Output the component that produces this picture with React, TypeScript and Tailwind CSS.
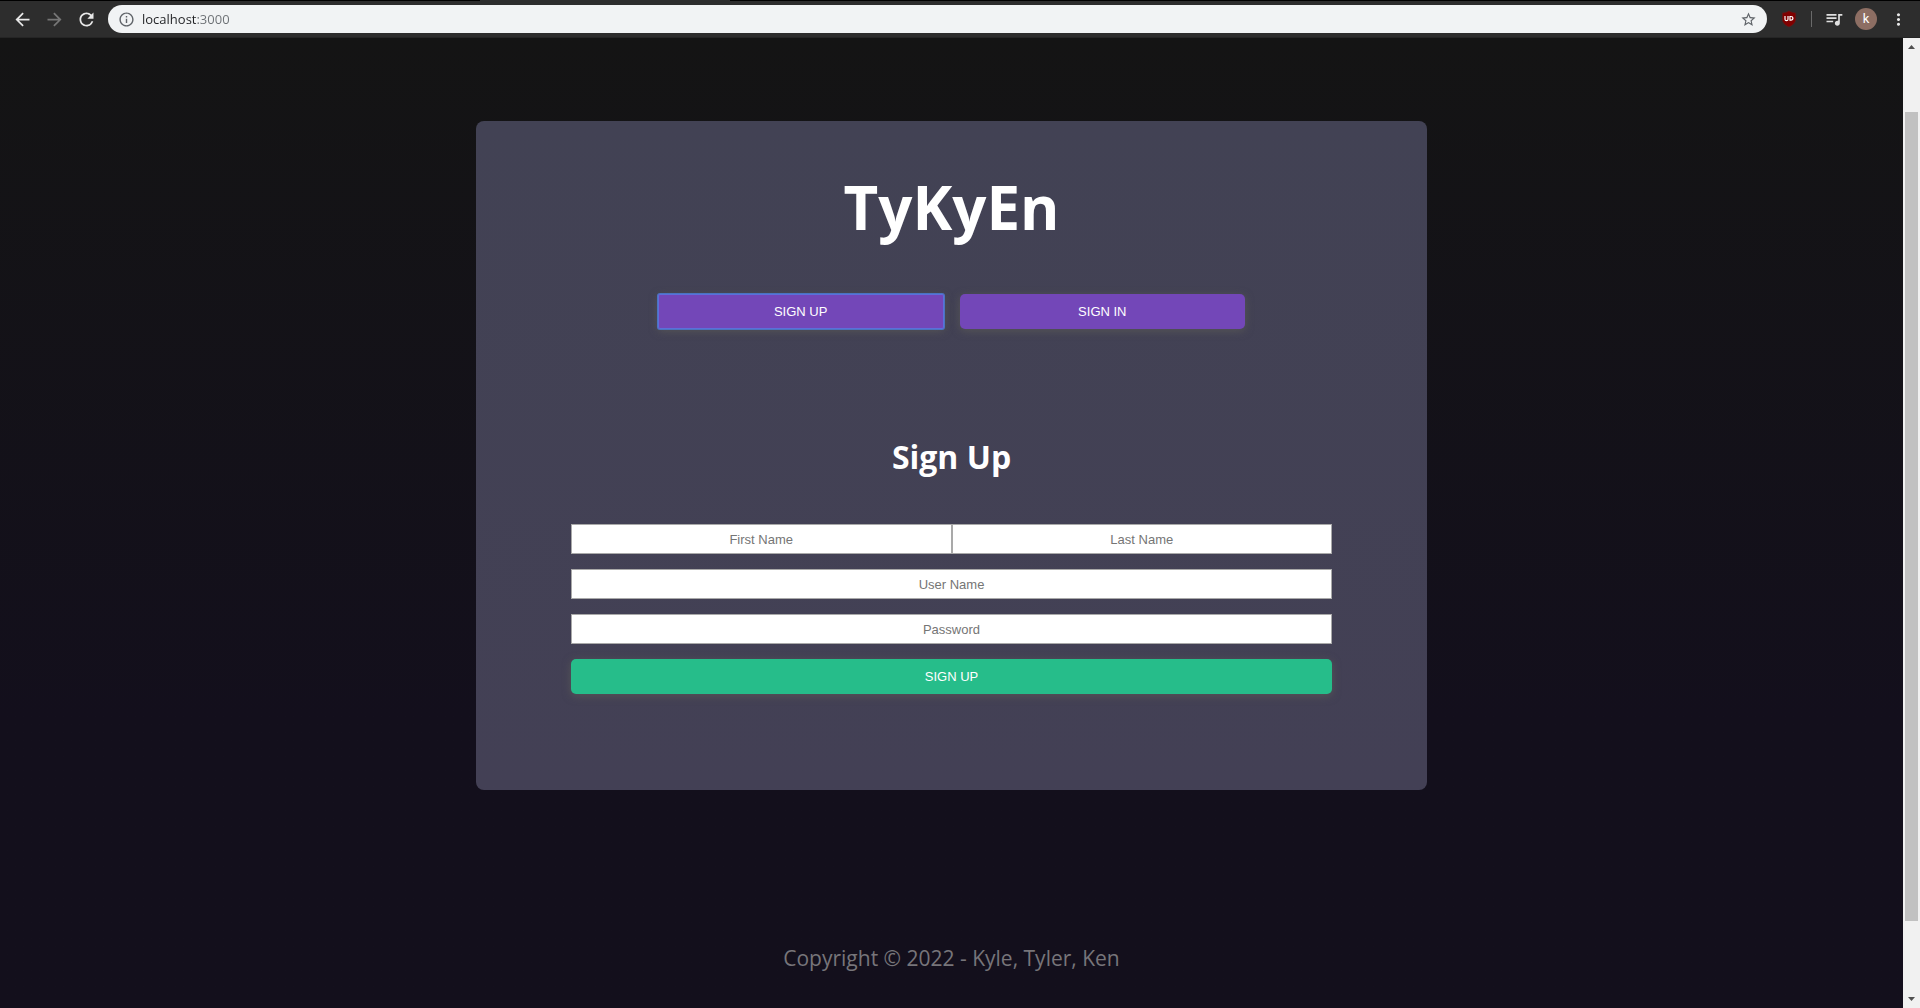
import type { ReactNode } from "react";
import {
  MdArrowBack,
  MdArrowForward,
  MdInfoOutline,
  MdMoreVert,
  MdQueueMusic,
  MdRefresh,
  MdStarBorder,
} from "react-icons/md";

function IconButton({ label, className, children }: { label: string; className: string; children: ReactNode }) {
  return (
    <button type="button" aria-label={label} className={`flex h-7 w-8 shrink-0 items-center justify-center ${className}`}>
      {children}
    </button>
  );
}

function ShieldIcon() {
  return (
    <svg width="16" height="18" viewBox="0 0 16 18" aria-hidden="true">
      <path d="M8 .8C6 2.300 3.600 2.800 1.300 2.900V9c0 4 3.200 6.400 6.700 8C11.500 15.400 14.700 13 14.700 9V2.900C12.400 2.800 10 2.300 8 .8z" fill="#800000" stroke="#5a2020" strokeWidth=".6" />
      <path d="M4 6v3.200c0 1 .6 1.500 1.500 1.500s1.500-.5 1.500-1.500V6M9 6.500v3.700h.9c1.300 0 2-.7 2-1.850s-.7-1.850-2-1.850z" fill="none" stroke="#fff" strokeWidth="1.200" />
    </svg>
  );
}

function Toolbar() {
  return (
    <header className="flex h-[38px] shrink-0 flex-col border-b border-[#252525] bg-[#2d2d2d]">
      <div className="flex h-px bg-black">
        <div className="w-1/4" />
        <div className="w-[13%] bg-[#2d2d2d]" />
      </div>
      <div className="flex flex-1 items-center px-1.5">
        <IconButton label="Back" className="text-[#e8e8e8]">
          <MdArrowBack size={21} />
        </IconButton>
        <IconButton label="Forward" className="text-[#767676]">
          <MdArrowForward size={21} />
        </IconButton>
        <IconButton label="Reload" className="text-[#e8e8e8]">
          <MdRefresh size={21} />
        </IconButton>
        <div className="ml-1.5 flex h-7 flex-1 items-center rounded-full bg-[#f1f3f4] pl-2.5">
          <MdInfoOutline size={17} className="text-[#5f6368]" />
          <input
            aria-label="Address"
            defaultValue="localhost:3000"
            className="ml-[7px] min-w-0 flex-1 bg-linear-to-r from-[#202124] from-[55px] to-[#6b6f73] to-[55px] bg-clip-text font-['Open_Sans','Noto_Sans',sans-serif] text-[13px] leading-5 text-transparent outline-none"
          />
          <button type="button" aria-label="Bookmark" className="px-2.5 text-[#5f6368]">
            <MdStarBorder size={17} />
          </button>
        </div>
        <IconButton label="Ad blocker" className="ml-1.5">
          <ShieldIcon />
        </IconButton>
        <div className="mx-1.5 h-4 w-px bg-[#6a6a6a]" />
        <IconButton label="Media controls" className="text-[#e0e0e0]">
          <MdQueueMusic size={20} />
        </IconButton>
        <button type="button" className="mx-[5px] h-[22px] w-[22px] rounded-full bg-[#8d6e63] font-['Roboto',sans-serif] text-[13px] leading-[22px] text-white">
          k
        </button>
        <IconButton label="Menu" className="text-[#e8e8e8]">
          <MdMoreVert size={19} />
        </IconButton>
      </div>
    </header>
  );
}

const buttonBase =
  "h-[35px] font-['Liberation_Sans',Arial,sans-serif] text-[13px] text-white shadow-[0_2px_8px_rgba(105,105,90,0.5)]";

function Field({ id, label, type = "text" }: { id: string; label: string; type?: string }) {
  return (
    <input
      id={id}
      type={type}
      aria-label={label}
      placeholder={label}
      className="h-[30px] min-w-0 flex-1 border border-[#a9a9a9] bg-white text-center font-['Liberation_Sans',Arial,sans-serif] text-[13px] text-black outline-none placeholder:text-[#757575]"
    />
  );
}

function SignUpForm() {
  return (
    <form className="mt-[43px] flex flex-col gap-[15px]" onSubmit={(e) => e.preventDefault()}>
      <div className="flex">
        <Field id="first-name" label="First Name" />
        <Field id="last-name" label="Last Name" />
      </div>
      <div className="flex">
        <Field id="user-name" label="User Name" />
      </div>
      <div className="flex">
        <Field id="password" label="Password" type="password" />
      </div>
      <button type="submit" className={`${buttonBase} rounded-[5px] bg-[#26bd8a]`}>SIGN UP</button>
    </form>
  );
}

function ScrollBar() {
  return (
    <div aria-hidden="true" className="flex w-[17px] shrink-0 flex-col items-center bg-[#f1f1f1]">
      <svg width="17" height="17" viewBox="0 0 17 17"><path d="M5 11h7L8.500 7z" fill="#505050" /></svg>
      <div className="grow-[57]" />
      <div className="w-[13px] grow-[808] bg-[#c1c1c1]" />
      <div className="grow-[70]" />
      <svg width="17" height="17" viewBox="0 0 17 17"><path d="M5 6h7L8.500 10z" fill="#505050" /></svg>
    </div>
  );
}

export default function App() {
  return (
    <div className="flex min-h-screen flex-col border-b border-[#2d2d2d] bg-[#130f1c]">
      <Toolbar />
      <div className="flex flex-1">
        <div className="flex flex-1 flex-col items-center bg-linear-to-b from-[#141414] to-[#130f1c] to-70% font-['Open_Sans','Noto_Sans',sans-serif]">
          <main className="mt-[83px] w-1/2 rounded-lg bg-linear-to-b from-[#424254] to-[#434055] px-[5%] pb-24 text-center text-white">
            <h1 className="pt-[38px] text-[60px] leading-[96px] font-bold">TyKyEn</h1>
            <div className="mt-[39px] flex justify-center gap-4 px-[87px]">
              <button type="button" className={`${buttonBase} flex-1 rounded-[2px] bg-[#7347b8] ring-1 ring-[#4a74c0] inset-ring-1 inset-ring-[#5b70da]`}>
                SIGN UP
              </button>
              <button type="button" className={`${buttonBase} flex-1 rounded-[5px] bg-[#7347b8]`}>
                SIGN IN
              </button>
            </div>
            <h2 className="mt-[104px] text-[32px] leading-[48px] font-bold">Sign Up</h2>
            <SignUpForm />
          </main>
          <footer className="mt-[150px] pb-8 text-[21px] leading-9 text-[#77757a]">
            Copyright © 2022 - Kyle, Tyler, Ken
          </footer>
        </div>
        <ScrollBar />
      </div>
    </div>
  );
}
